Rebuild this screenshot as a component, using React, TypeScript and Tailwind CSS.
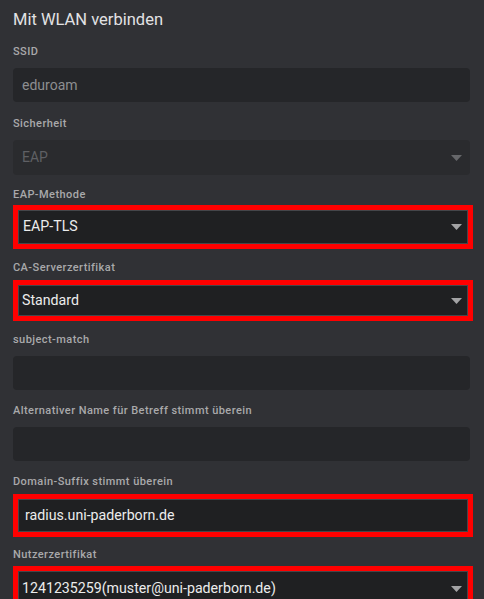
import React from "react";

function Arrow({ dim }: { dim?: boolean }) {
  return (
    <svg width="11" height="6" viewBox="0 0 11 6" className="shrink-0">
      <path d="M0 0 L11 0 L5.5 6 Z" fill={dim ? "#66676a" : "#a3a3a5"} />
    </svg>
  );
}

function Label({ children }: { children: React.ReactNode }) {
  return (
    <div className="h-[14px] leading-[14px] text-[11px] font-medium tracking-[0.04em] text-[#a9a9ab] mb-[9px]">
      {children}
    </div>
  );
}

function Field({ label, value, mb }: { label: string; value?: string; mb: string }) {
  return (
    <div className={mb}>
      <Label>{label}</Label>
      <div className="h-[34px] rounded-[4px] bg-[#252629] flex items-center pl-[9px] pr-[8px]">
        <span className="text-[14px] text-[#8d8e90]">{value}</span>
      </div>
    </div>
  );
}

function DisabledSelect({ label, value }: { label: string; value: string }) {
  return (
    <div className="mb-[13px]">
      <Label>{label}</Label>
      <div className="h-[35px] rounded-[4px] bg-[#2a2b2e] flex items-center justify-between pl-[9px] pr-[8px]">
        <span className="text-[14px] text-[#5f6064]">{value}</span>
        <Arrow dim />
      </div>
    </div>
  );
}

// red annotation frame laid over the field
function Marked({
  label,
  value,
  select,
  frame,
  textPad,
  mb,
}: {
  label: string;
  value: string;
  select?: boolean;
  frame: string;
  textPad: string;
  mb: string;
}) {
  return (
    <div className={mb}>
      <Label>{label}</Label>
      <div className="relative h-[34px]">
        <div className={`absolute left-0 right-[-3px] border-[5px] border-[#ff0000] ${frame}`}>
          <div className={`h-full bg-[#1f2022] border border-[#45464a] flex items-center justify-between pr-[5px] ${textPad}`}>
            <span className="text-[14.2px] text-[#ececec] whitespace-nowrap">{value}</span>
            {select && <Arrow />}
          </div>
        </div>
      </div>
    </div>
  );
}

export default function App() {
  return (
    <div
      className="w-[484px] h-[599px] overflow-hidden bg-[#303135] pl-[13px] pr-[14px] pt-[8px]"
      style={{ fontFamily: "Roboto, 'Noto Sans', sans-serif" }}
    >
      <h1 className="h-[24px] leading-[24px] text-[16.5px] text-[#e2e2e4] mb-[13px]">Mit WLAN verbinden</h1>
      <Field label="SSID" value="eduroam" mb="mb-[15px]" />
      <DisabledSelect label="Sicherheit" value="EAP" />
      <Marked label="EAP-Methode" value="EAP-TLS" select frame="top-[-6px] bottom-[-4px]" textPad="pl-[4px]" mb="mb-[16px]" />
      <Marked label="CA-Serverzertifikat" value="Standard" select frame="top-[-4px] bottom-[-3px]" textPad="pl-[3px]" mb="mb-[15px]" />
      <Field label="subject-match" mb="mb-[14px]" />
      <Field label="Alternativer Name für Betreff stimmt überein" mb="mb-[14px]" />
      <Marked label="Domain-Suffix stimmt überein" value="radius.uni-paderborn.de" frame="top-[-4px] bottom-[-5px]" textPad="pl-[6px]" mb="mb-[16px]" />
      <Marked label="Nutzerzertifikat" value="1241235259(muster@uni-paderborn.de)" select frame="top-[-5px] bottom-[-6px]" textPad="pl-[3px]" mb="mb-[15px]" />
    </div>
  );
}
